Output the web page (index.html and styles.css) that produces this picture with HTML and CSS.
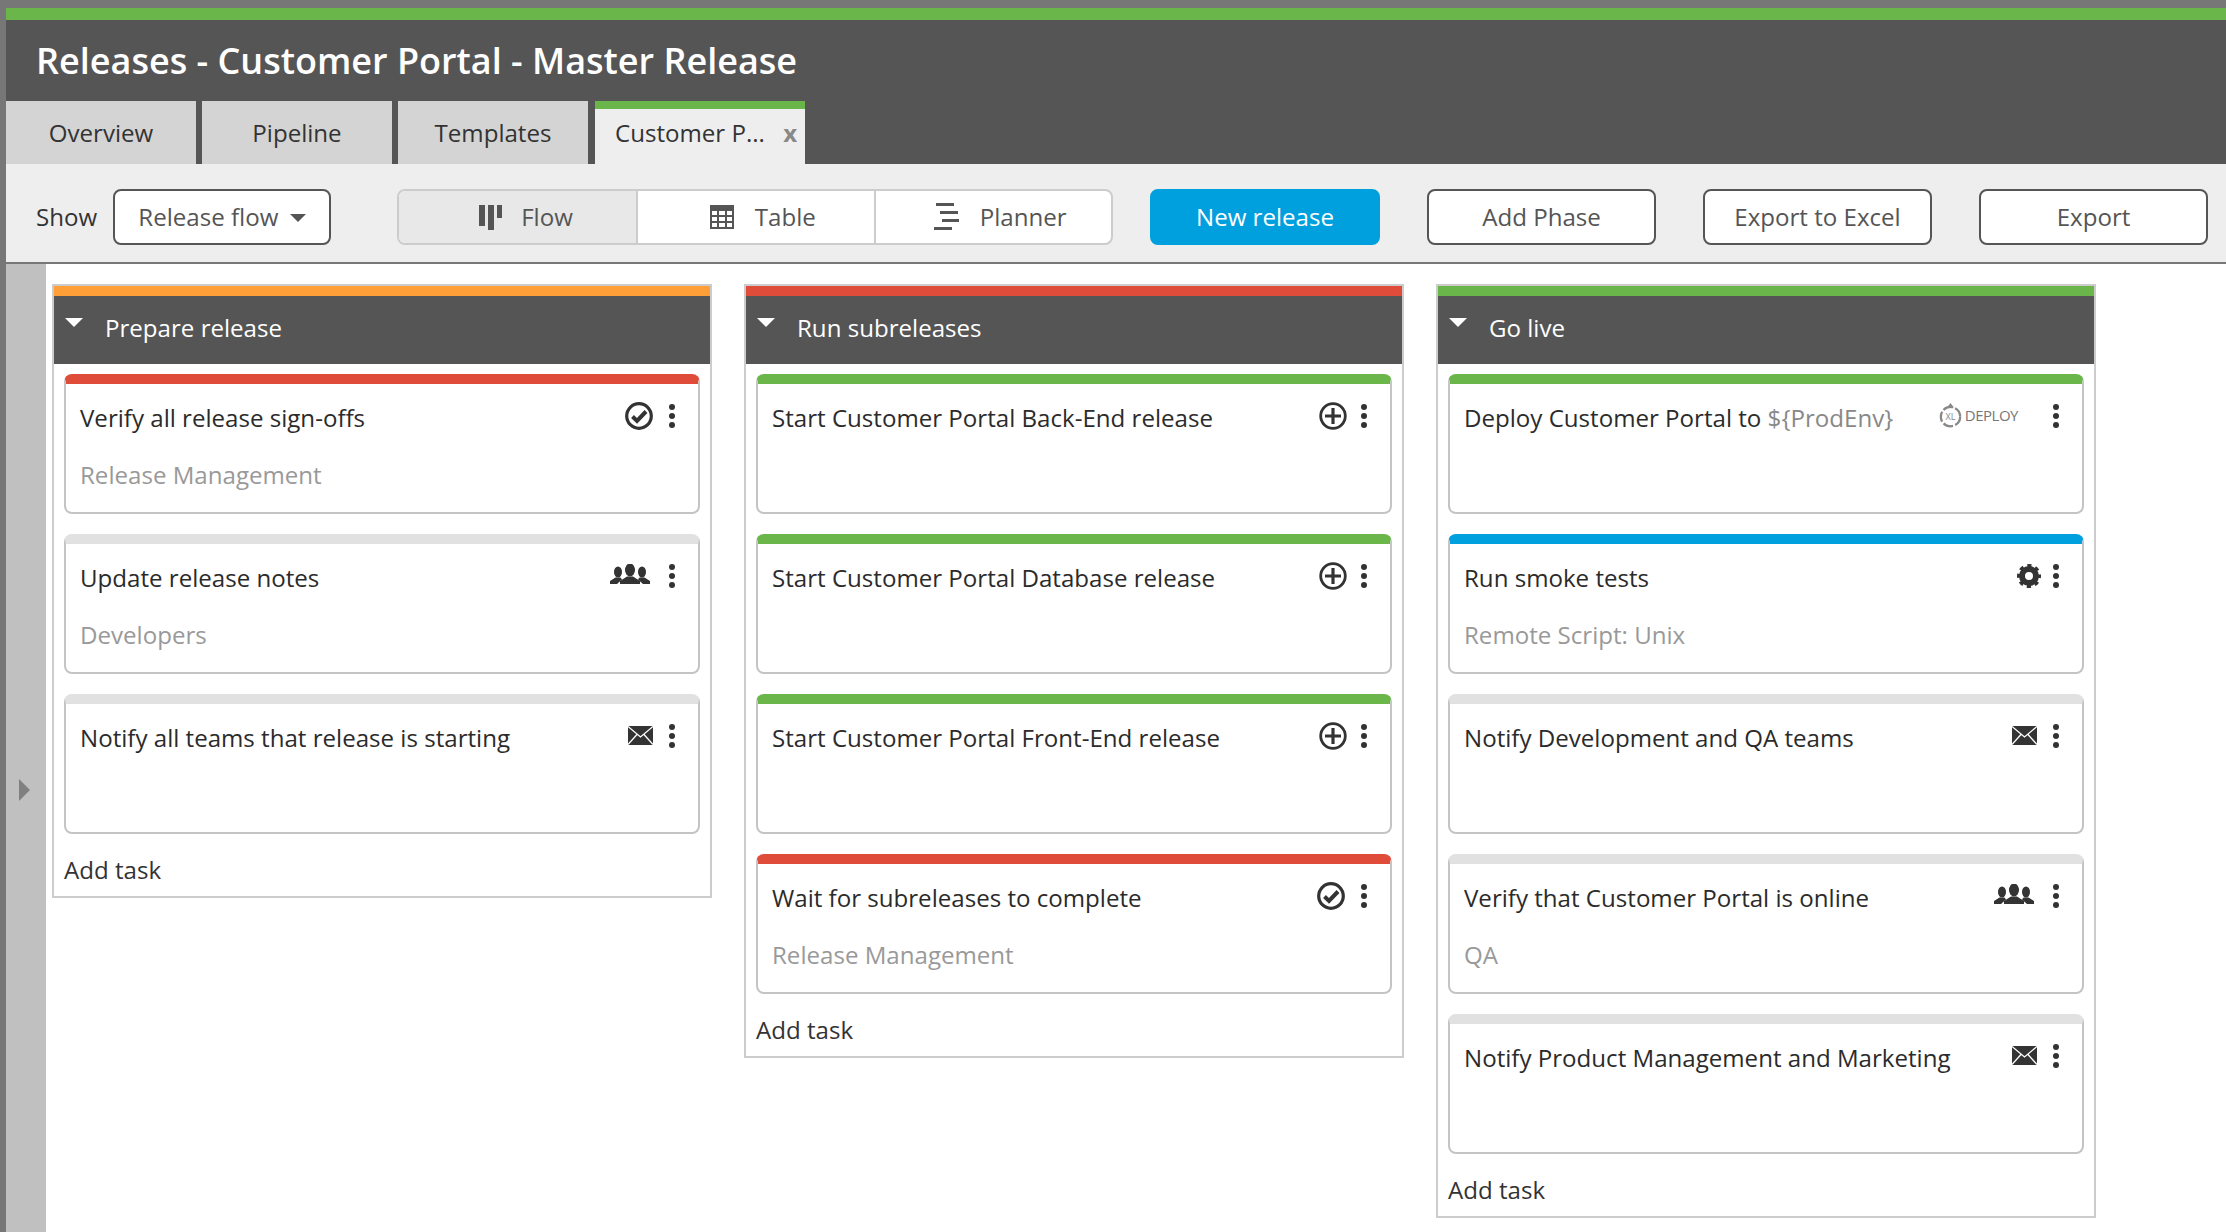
FILE: index.html
```html
<!DOCTYPE html>
<html lang="en">
<head>
  <meta charset="UTF-8">
  <title>Releases - Customer Portal - Master Release</title>
  <link rel="stylesheet" href="styles.css">
</head>
<body>
  <svg class="defs" width="0" height="0">
    <symbol id="i-check" viewBox="0 0 28 28">
      <circle cx="14" cy="14" r="12.3" fill="none" stroke="#333" stroke-width="3.2"/>
      <path d="M7.500 14.500l4.500 4.500L21 9.500" fill="none" stroke="#333" stroke-width="4"/>
    </symbol>
    <symbol id="i-plus" viewBox="0 0 28 28">
      <circle cx="14" cy="14" r="12.3" fill="none" stroke="#333" stroke-width="2.8"/>
      <path d="M14 6v16M6 14h16" fill="none" stroke="#333" stroke-width="3.2"/>
    </symbol>
    <symbol id="i-people" viewBox="0 0 40 20">
      <ellipse cx="8" cy="8" rx="4" ry="5.500" fill="#333"/>
      <ellipse cx="32" cy="8" rx="4" ry="5.500" fill="#333"/>
      <path d="M0 20v-3l5.500-3.500h5l1.500 2-5 4.500zM40 20v-3l-5.500-3.500h-5l-1.500 2 5 4.500z" fill="#333"/>
      <ellipse cx="20" cy="6" rx="5" ry="6.500" fill="#333"/>
      <path d="M10 20v-3l7-4.500h6l7 4.500v3z" fill="#333"/>
    </symbol>
    <symbol id="i-mail" viewBox="0 0 25 19">
      <rect width="25" height="19" fill="#333"/>
      <path d="M0 .5l12.500 10.500L25 .5M0 18.500l9-10M25 18.500l-9-10" fill="none" stroke="#fff" stroke-width="1.300"/>
    </symbol>
    <symbol id="i-gear" viewBox="0 0 24 24">
      <circle cx="12" cy="12" r="7" fill="none" stroke="#333" stroke-width="6"/>
      <circle cx="12" cy="12" r="10.500" fill="none" stroke="#333" stroke-width="3" stroke-dasharray="4.200 4.050" stroke-dashoffset="2.100"/>
    </symbol>
    <symbol id="i-more" viewBox="0 0 6 24">
      <circle cx="3" cy="3" r="3" fill="#333"/>
      <circle cx="3" cy="12" r="3" fill="#333"/>
      <circle cx="3" cy="21" r="3" fill="#333"/>
    </symbol>
  </svg>

  <header class="page-head">
    <h1>Releases - Customer Portal - Master Release</h1>
    <nav class="tabs">
      <a class="tab">Overview</a>
      <a class="tab">Pipeline</a>
      <a class="tab">Templates</a>
      <a class="tab tab-active">Customer P... <span class="tab-close">x</span></a>
    </nav>
  </header>

  <div class="toolbar">
    <span class="show-label">Show</span>
    <button class="btn btn-select">Release flow <i class="caret"></i></button>
    <div class="views">
      <a class="view view-flow view-active">
        <svg width="24" height="26" viewBox="0 0 24 26"><path d="M0 1h6v21H0zM9 1h6v25H9zM18 1h5v13h-5z" fill="#555"/></svg>
        Flow
      </a>
      <a class="view view-table">
        <svg width="24" height="24" viewBox="0 0 24 24"><path d="M0 0h24v24H0z" fill="#555"/><path d="M2 6h5v4H2zM9 6h6v4H9zM17 6h5v4h-5zM2 12h5v4H2zM9 12h6v4H9zM17 12h5v4h-5zM2 18h5v4H2zM9 18h6v4H9zM17 18h5v4h-5z" fill="#fff"/></svg>
        Table
      </a>
      <a class="view view-planner">
        <svg width="25" height="27" viewBox="0 0 25 27"><path d="M2 0h18v3H2zM6 8h18v3H6zM8 16h17v3H8zM0 24h18v3H0z" fill="#555"/></svg>
        Planner
      </a>
    </div>
    <button class="btn btn-primary">New release</button>
    <button class="btn btn-gap">Add Phase</button>
    <button class="btn btn-gap">Export to Excel</button>
    <button class="btn btn-gap">Export</button>
  </div>

  <main class="main">
    <aside class="side"><i class="side-arrow"></i></aside>
    <div class="columns">

      <section class="phase phase-orange">
        <h2 class="phase-title"><i class="phase-caret"></i>Prepare release</h2>
        <div class="cards">
          <article class="card card-red">
            <div class="card-head"><span class="card-title">Verify all release sign-offs</span>
              <svg class="icon icon-check"><use href="#i-check"/></svg><svg class="more"><use href="#i-more"/></svg></div>
            <p class="card-sub">Release Management</p>
          </article>
          <article class="card">
            <div class="card-head"><span class="card-title">Update release notes</span>
              <svg class="icon icon-people"><use href="#i-people"/></svg><svg class="more"><use href="#i-more"/></svg></div>
            <p class="card-sub">Developers</p>
          </article>
          <article class="card">
            <div class="card-head"><span class="card-title">Notify all teams that release is starting</span>
              <svg class="icon icon-mail"><use href="#i-mail"/></svg><svg class="more"><use href="#i-more"/></svg></div>
          </article>
        </div>
        <a class="add-task">Add task</a>
      </section>

      <section class="phase phase-red">
        <h2 class="phase-title"><i class="phase-caret"></i>Run subreleases</h2>
        <div class="cards">
          <article class="card card-green">
            <div class="card-head"><span class="card-title">Start Customer Portal Back-End release</span>
              <svg class="icon icon-plus"><use href="#i-plus"/></svg><svg class="more"><use href="#i-more"/></svg></div>
          </article>
          <article class="card card-green">
            <div class="card-head"><span class="card-title">Start Customer Portal Database release</span>
              <svg class="icon icon-plus"><use href="#i-plus"/></svg><svg class="more"><use href="#i-more"/></svg></div>
          </article>
          <article class="card card-green">
            <div class="card-head"><span class="card-title">Start Customer Portal Front-End release</span>
              <svg class="icon icon-plus"><use href="#i-plus"/></svg><svg class="more"><use href="#i-more"/></svg></div>
          </article>
          <article class="card card-red">
            <div class="card-head"><span class="card-title">Wait for subreleases to complete</span>
              <svg class="icon icon-check"><use href="#i-check"/></svg><svg class="more"><use href="#i-more"/></svg></div>
            <p class="card-sub">Release Management</p>
          </article>
        </div>
        <a class="add-task">Add task</a>
      </section>

      <section class="phase phase-green">
        <h2 class="phase-title"><i class="phase-caret"></i>Go live</h2>
        <div class="cards">
          <article class="card card-green">
            <div class="card-head"><span class="card-title">Deploy Customer Portal to <span class="var">${ProdEnv}</span></span>
              <span class="deploy">
                <svg width="25" height="25" viewBox="0 0 22 22"><circle cx="11" cy="12" r="8.500" fill="none" stroke="#888" stroke-width="2" stroke-dasharray="9 2"/><path d="M11 0l3 4H8z" fill="#888"/><text x="11" y="15" text-anchor="middle" class="deploy-xl">XL</text></svg>
                <span class="deploy-name">DEPLOY</span>
              </span><svg class="more"><use href="#i-more"/></svg></div>
          </article>
          <article class="card card-blue">
            <div class="card-head"><span class="card-title">Run smoke tests</span>
              <svg class="icon icon-gear"><use href="#i-gear"/></svg><svg class="more"><use href="#i-more"/></svg></div>
            <p class="card-sub">Remote Script: Unix</p>
          </article>
          <article class="card">
            <div class="card-head"><span class="card-title">Notify Development and QA teams</span>
              <svg class="icon icon-mail"><use href="#i-mail"/></svg><svg class="more"><use href="#i-more"/></svg></div>
          </article>
          <article class="card">
            <div class="card-head"><span class="card-title">Verify that Customer Portal is online</span>
              <svg class="icon icon-people"><use href="#i-people"/></svg><svg class="more"><use href="#i-more"/></svg></div>
            <p class="card-sub">QA</p>
          </article>
          <article class="card">
            <div class="card-head"><span class="card-title">Notify Product Management and Marketing</span>
              <svg class="icon icon-mail"><use href="#i-mail"/></svg><svg class="more"><use href="#i-more"/></svg></div>
          </article>
        </div>
        <a class="add-task">Add task</a>
      </section>

    </div>
  </main>
</body>
</html>
```

FILE: styles.css
```css
* {
  box-sizing: border-box;
}

html, body {
  height: 100%;
}

body {
  margin: 0;
  padding: 8px 0 0 6px;
  overflow: hidden;
  background: #777;
  color: #333;
  font-family: "Open Sans", "Liberation Sans", sans-serif;
  font-size: 24.1px;
}

.defs {
  position: absolute;
}

/* page header */
.page-head {
  background: #555;
  border-top: 12px solid #6ab64a;
}

h1 {
  margin: 0;
  height: 81px;
  padding-left: 30px;
  color: #fff;
  font-size: 36px;
  font-weight: 600;
  line-height: 81px;
}

.tabs {
  display: flex;
  gap: 6px;
  height: 63px;
}

.tab {
  width: 190px;
  background: #d4d4d4;
  text-align: center;
  line-height: 63px;
}

.tab-active {
  width: 210px;
  margin-left: 1px;
  background: #eee;
  border-top: 8px solid #6ab64a;
  line-height: 48px;
  padding-left: 20px;
  text-align: left;
  white-space: nowrap;
}

.tab-close {
  margin-left: 12px;
  color: #888;
  font-size: 24px;
  font-weight: 700;
}

/* toolbar */
.toolbar {
  display: flex;
  align-items: center;
  height: 100px;
  padding: 7px 0 0 30px;
  background: #eee;
  border-bottom: 2px solid #777;
}

.show-label {
  width: 77px;
}

.btn {
  height: 56px;
  width: 229px;
  background: #fff;
  border: 2px solid #555;
  border-radius: 8px;
  color: #555;
  font-family: inherit;
  font-size: 24.1px;
}

.btn-select {
  width: 218px;
}

.caret {
  display: inline-block;
  margin-left: 5px;
  vertical-align: 4px;
  border-top: 8px solid #555;
  border-left: 8px solid transparent;
  border-right: 8px solid transparent;
}

.views {
  display: flex;
  width: 716px;
  height: 56px;
  margin-left: 66px;
  background: #fff;
  border: 2px solid #ccc;
  border-radius: 8px;
  color: #555;
}

.view {
  display: flex;
  align-items: center;
  justify-content: center;
  gap: 21px;
  flex: 1;
  padding-left: 14px;
  border-left: 2px solid #ccc;
}

.view-flow {
  flex: none;
  width: 237px;
  gap: 18px;
  padding-left: 17px;
  border-left: none;
}

.view-active {
  background: #e8e8e8;
  border-radius: 6px 0 0 6px;
}

.btn-primary {
  width: 230px;
  margin-left: 37px;
  background: #009fde;
  border-color: #009fde;
  color: #fff;
}

.btn-gap {
  margin-left: 47px;
}

/* board */
.main {
  display: flex;
  height: 968px;
  background: #fff;
}

.side {
  display: flex;
  align-items: center;
  flex: none;
  width: 40px;
  padding: 84px 0 0 13px;
  background: #c0c0c0;
}

.side-arrow {
  border-left: 11px solid #808080;
  border-top: 11px solid transparent;
  border-bottom: 11px solid transparent;
}

.columns {
  display: flex;
  align-items: flex-start;
  gap: 32px;
  padding: 20px 0 0 6px;
}

.phase {
  width: 660px;
  border: 2px solid #ccc;
  background: #fff;
}

.phase-title {
  display: flex;
  align-items: center;
  height: 78px;
  margin: 0;
  padding: 0 0 6px 11px;
  background: #555;
  border-top: 10px solid;
  color: #fff;
  font-size: 24.1px;
  font-weight: 400;
}

.phase-orange .phase-title {
  border-top-color: #ff9f38;
}

.phase-red .phase-title {
  border-top-color: #df4c3a;
}

.phase-green .phase-title {
  border-top-color: #6ab64a;
}

.phase-caret {
  margin: 0 22px 10px 0;
  border-top: 9px solid #fff;
  border-left: 9px solid transparent;
  border-right: 9px solid transparent;
}

.cards {
  display: flex;
  flex-direction: column;
  gap: 20px;
  padding: 10px 10px 0 10px;
}

.card {
  height: 140px;
  padding: 16px 13px 0 14px;
  border: 2px solid #c4c4c4;
  border-top: 10px solid #e1e1e1;
  border-radius: 8px;
}

.card-red {
  border-top-color: #df4c3a;
}

.card-green {
  border-top-color: #6ab64a;
}

.card-blue {
  border-top-color: #009fde;
}

.card-head {
  display: flex;
  align-items: center;
  height: 34px;
}

.card-title {
  flex: 1;
  white-space: nowrap;
  color: #2b2b2b;
}

.var {
  color: #888;
}

.card-sub {
  margin: 24px 0 0;
  color: #999;
  line-height: 34px;
}

.icon {
  margin-bottom: 2px;
}

.icon-check {
  width: 28px;
  height: 28px;
  margin-right: 16px;
}

.icon-plus {
  width: 28px;
  height: 28px;
  margin-right: 14px;
}

.icon-people {
  width: 40px;
  height: 20px;
  margin-right: 19px;
  margin-bottom: 6px;
}

.icon-mail {
  width: 25px;
  height: 19px;
  margin-right: 16px;
  margin-bottom: 4px;
}

.icon-gear {
  width: 24px;
  height: 24px;
  margin-right: 12px;
}

.more {
  flex: none;
  width: 6px;
  height: 24px;
  margin: 0 10px 2px 0;
}

.deploy {
  display: flex;
  align-items: center;
  gap: 2px;
  margin: 0 35px 4px 0;
}

.deploy-name {
  color: #777;
  font-size: 15px;
  letter-spacing: -0.5px;
}

.deploy-xl {
  fill: #888;
  font-size: 8px;
}

.add-task {
  display: block;
  height: 62px;
  padding: 19px 0 0 10px;
  line-height: 34px;
}
```
